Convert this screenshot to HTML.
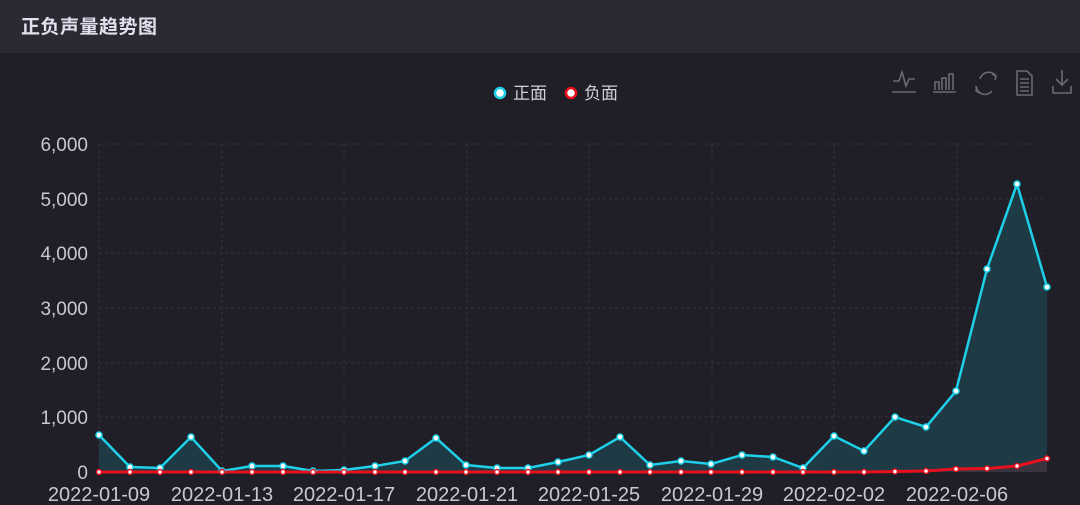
<!DOCTYPE html>
<html><head><meta charset="utf-8"><style>
html,body{margin:0;padding:0;width:1080px;height:505px;overflow:hidden;background:#201f28;font-family:"Liberation Sans","Noto Sans CJK SC",sans-serif;}
.hd{position:absolute;left:0;top:0;width:1080px;height:53px;background:#2b2a33;}
.hd span{position:absolute;left:21px;top:12px;font-size:19px;font-weight:bold;color:#e2e0ee;letter-spacing:0.5px;}
svg{position:absolute;left:0;top:0}
</style></head><body>
<div class="hd"><span>正负声量趋势图</span></div>
<svg width="1080" height="505" viewBox="0 0 1080 505" font-family="Liberation Sans, Noto Sans CJK SC, sans-serif">
<g stroke="#33323c" stroke-dasharray="3,3" stroke-width="1">
<line x1="99" y1="144" x2="1047" y2="144"/><line x1="99" y1="199" x2="1047" y2="199"/><line x1="99" y1="253" x2="1047" y2="253"/><line x1="99" y1="308" x2="1047" y2="308"/><line x1="99" y1="363" x2="1047" y2="363"/><line x1="99" y1="417" x2="1047" y2="417"/>
<line x1="99" y1="144" x2="99" y2="472"/><line x1="222" y1="144" x2="222" y2="472"/><line x1="344" y1="144" x2="344" y2="472"/><line x1="467" y1="144" x2="467" y2="472"/><line x1="589" y1="144" x2="589" y2="472"/><line x1="712" y1="144" x2="712" y2="472"/><line x1="834" y1="144" x2="834" y2="472"/><line x1="957" y1="144" x2="957" y2="472"/>
</g>
<g fill="#c9c7d3" font-size="19" text-anchor="end">
<text x="88" y="151">6,000</text><text x="88" y="206">5,000</text><text x="88" y="260">4,000</text><text x="88" y="315">3,000</text><text x="88" y="370">2,000</text><text x="88" y="424">1,000</text><text x="88" y="479">0</text>
</g>
<g fill="#c9c7d3" font-size="20" text-anchor="middle">
<text x="99" y="501">2022-01-09</text><text x="222" y="501">2022-01-13</text><text x="344" y="501">2022-01-17</text><text x="467" y="501">2022-01-21</text><text x="589" y="501">2022-01-25</text><text x="712" y="501">2022-01-29</text><text x="834" y="501">2022-02-02</text><text x="957" y="501">2022-02-06</text>
</g>
<polygon fill="#1e3a45" points="99,472 99,435 130,467 160,468 191,437 222,471 252,466 283,466 313,471 344,470 375,466 405,461 436,438 466,465 497,468 528,468 558,462 589,455 620,437 650,465 681,461 711,464 742,455 773,457 803,468 834,436 864,451 895,417 926,427 956,391 987,269 1017,184 1047,287 1047,472"/>
<polyline fill="none" stroke="#1ed0e8" stroke-width="2.5" points="99,435 130,467 160,468 191,437 222,471 252,466 283,466 313,471 344,470 375,466 405,461 436,438 466,465 497,468 528,468 558,462 589,455 620,437 650,465 681,461 711,464 742,455 773,457 803,468 834,436 864,451 895,417 926,427 956,391 987,269 1017,184 1047,287"/>
<polygon fill="#3a3440" points="956,472 956,469 987,468.5 1017,466 1047,458.5 1047,472"/>
<polyline fill="none" stroke="#e8101c" stroke-width="3" points="99,472 130,472 160,472 191,472 222,472 252,472 283,472 313,472 344,472 375,472 405,472 436,472 466,472 497,472 528,472 558,472 589,472 620,472 650,472 681,472 711,472 742,472 773,472 803,472 834,472 864,472 895,471.5 926,471 956,469 987,468.5 1017,466 1047,458.5"/>
<g fill="#fff" stroke="#1ed0e8" stroke-width="1.5">
<circle cx="99" cy="435" r="3"/><circle cx="130" cy="467" r="3"/><circle cx="160" cy="468" r="3"/><circle cx="191" cy="437" r="3"/><circle cx="222" cy="471" r="3"/><circle cx="252" cy="466" r="3"/><circle cx="283" cy="466" r="3"/><circle cx="313" cy="471" r="3"/><circle cx="344" cy="470" r="3"/><circle cx="375" cy="466" r="3"/><circle cx="405" cy="461" r="3"/><circle cx="436" cy="438" r="3"/><circle cx="466" cy="465" r="3"/><circle cx="497" cy="468" r="3"/><circle cx="528" cy="468" r="3"/><circle cx="558" cy="462" r="3"/><circle cx="589" cy="455" r="3"/><circle cx="620" cy="437" r="3"/><circle cx="650" cy="465" r="3"/><circle cx="681" cy="461" r="3"/><circle cx="711" cy="464" r="3"/><circle cx="742" cy="455" r="3"/><circle cx="773" cy="457" r="3"/><circle cx="803" cy="468" r="3"/><circle cx="834" cy="436" r="3"/><circle cx="864" cy="451" r="3"/><circle cx="895" cy="417" r="3"/><circle cx="926" cy="427" r="3"/><circle cx="956" cy="391" r="3"/><circle cx="987" cy="269" r="3"/><circle cx="1017" cy="184" r="3"/><circle cx="1047" cy="287" r="3"/>
</g>
<g fill="#fff" stroke="#e8101c" stroke-width="1.5">
<circle cx="99" cy="472" r="2.5"/><circle cx="130" cy="472" r="2.5"/><circle cx="160" cy="472" r="2.5"/><circle cx="191" cy="472" r="2.5"/><circle cx="222" cy="472" r="2.5"/><circle cx="252" cy="472" r="2.5"/><circle cx="283" cy="472" r="2.5"/><circle cx="313" cy="472" r="2.5"/><circle cx="344" cy="472" r="2.5"/><circle cx="375" cy="472" r="2.5"/><circle cx="405" cy="472" r="2.5"/><circle cx="436" cy="472" r="2.5"/><circle cx="466" cy="472" r="2.5"/><circle cx="497" cy="472" r="2.5"/><circle cx="528" cy="472" r="2.5"/><circle cx="558" cy="472" r="2.5"/><circle cx="589" cy="472" r="2.5"/><circle cx="620" cy="472" r="2.5"/><circle cx="650" cy="472" r="2.5"/><circle cx="681" cy="472" r="2.5"/><circle cx="711" cy="472" r="2.5"/><circle cx="742" cy="472" r="2.5"/><circle cx="773" cy="472" r="2.5"/><circle cx="803" cy="472" r="2.5"/><circle cx="834" cy="472" r="2.5"/><circle cx="864" cy="472" r="2.5"/><circle cx="895" cy="471.5" r="2.5"/><circle cx="926" cy="471" r="2.5"/><circle cx="956" cy="469" r="2.5"/><circle cx="987" cy="468.5" r="2.5"/><circle cx="1017" cy="466" r="2.5"/><circle cx="1047" cy="458.5" r="2.5"/>
</g>
<!-- legend -->
<circle cx="500" cy="93" r="5" fill="#fff" stroke="#1ed0e8" stroke-width="2.5"/>
<text x="513" y="99" font-size="17" fill="#d0cedb">正面</text>
<circle cx="571" cy="93" r="5" fill="#fff" stroke="#e8101c" stroke-width="2.5"/>
<text x="584" y="99" font-size="17" fill="#d0cedb">负面</text>
<!-- toolbox -->
<g fill="none" stroke="#6a6974" stroke-width="1.6">
<path d="M893,81 h6 l3,-9 l4,14 l3,-7 h6"/><path d="M892,92 h24"/>
<path d="M935,90 v-8 h4 v8 M942,90 v-12 h4 v12 M949,90 v-16 h4 v16"/><path d="M933,92 h23"/>
<path d="M996,76 a9,9 0 0 0 -16,3 M976,86 a9,9 0 0 0 16,5"/><path d="M992,74 l4,2 l-1,4 M980,93 l-4,-2 l1,-4"/>
<path d="M1017,71 h10 l5,5 v19 h-15 z M1020,79 h9 M1020,83 h9 M1020,87 h9 M1020,91 h9"/>
<path d="M1062,70 v14 M1056,79 l6,6 l6,-6 M1053,86 v7 h18 v-7"/>
</g>
</svg>
</body></html>
